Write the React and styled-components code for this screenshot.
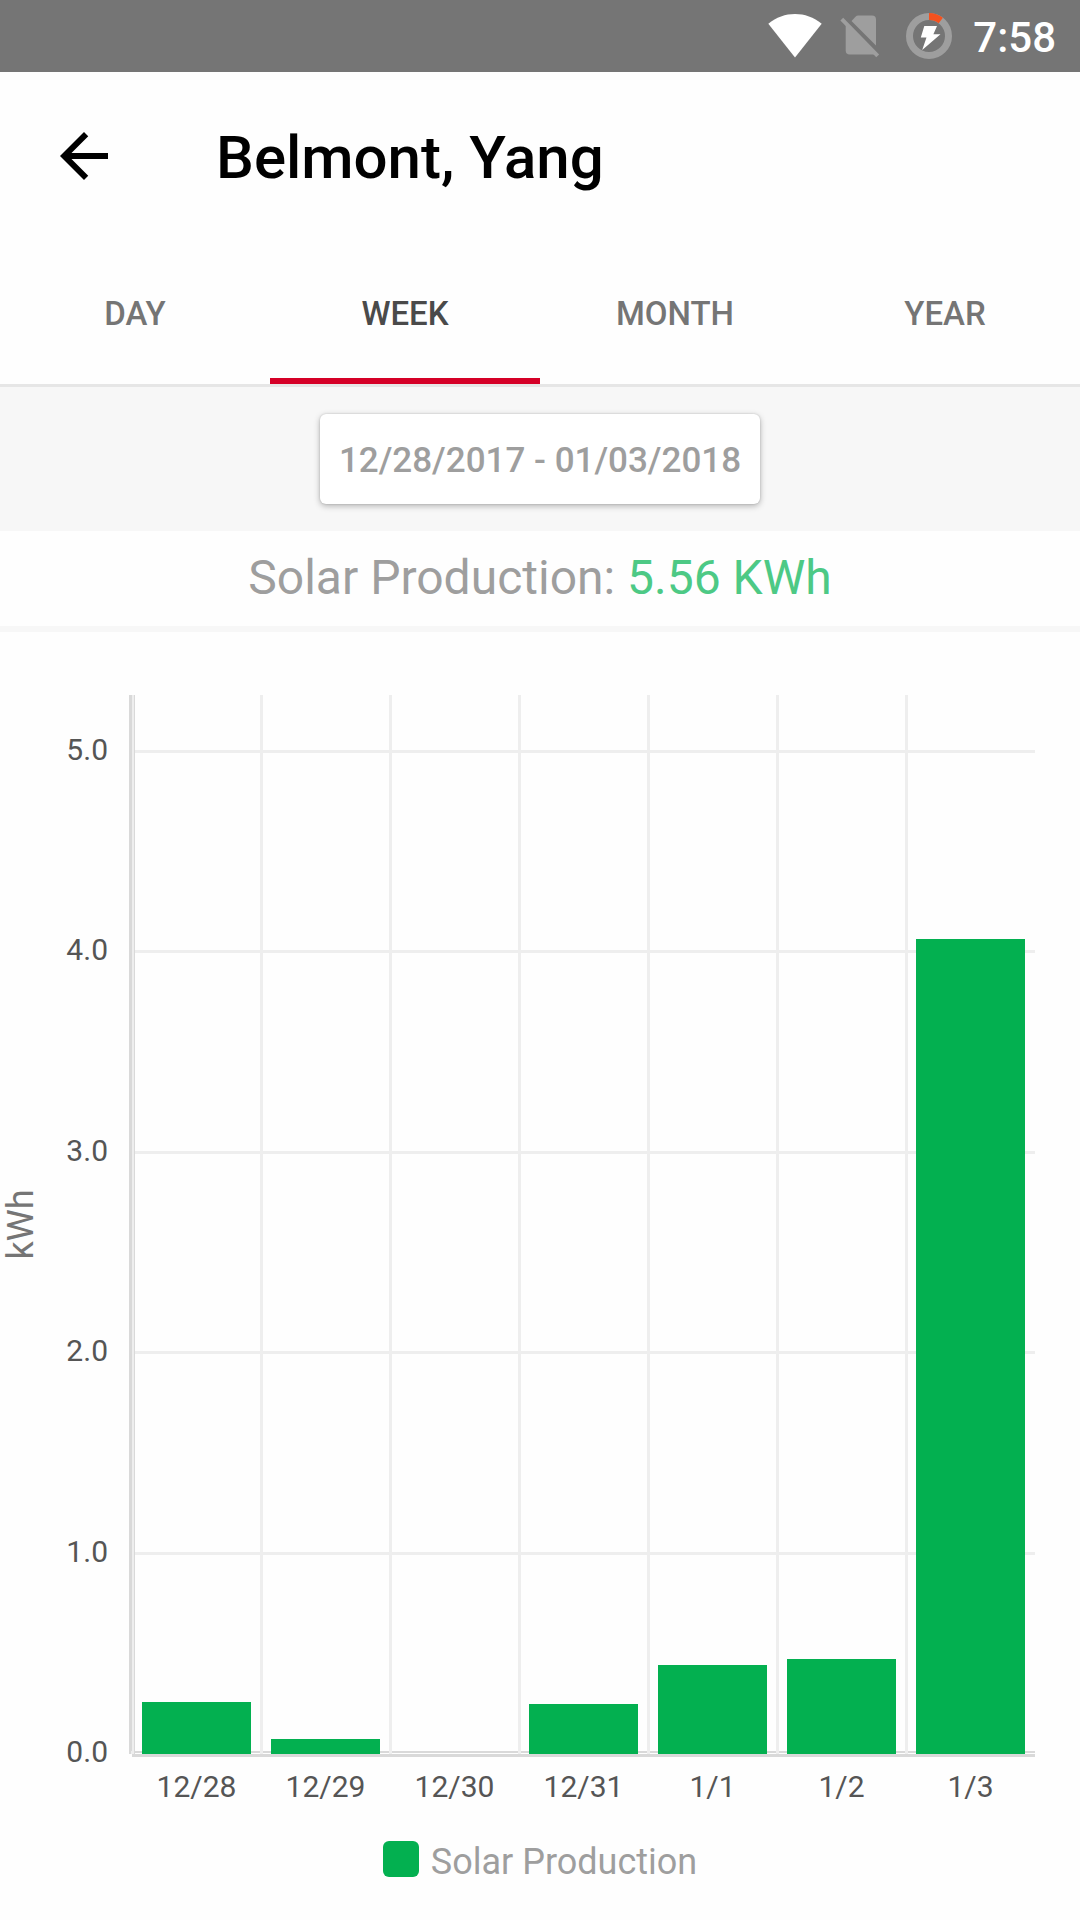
import React, { useState } from 'react';
import styled, { createGlobalStyle } from 'styled-components';

const TABS = ['DAY', 'WEEK', 'MONTH', 'YEAR'];

const PRODUCTION = [
  { day: '12/28', value: 0.26 },
  { day: '12/29', value: 0.075 },
  { day: '12/30', value: 0 },
  { day: '12/31', value: 0.25 },
  { day: '1/1', value: 0.445 },
  { day: '1/2', value: 0.475 },
  { day: '1/3', value: 4.065 },
];

const TICKS = [0, 1, 2, 3, 4, 5];

// vertical scale of the chart
const BASELINE = 1059;
const UNIT = 200.5;

const yOf = (value) => Math.round(BASELINE - value * UNIT);
const xOf = (index) => `${(index * 100) / PRODUCTION.length}%`;

const WifiIcon = () => (
  <svg width="54" height="44" viewBox="0 0 54 44" aria-hidden="true">
    <path d="M27 43.500 L0.300 9.800 C16 -3.200 38 -3.200 53.700 9.800 Z" fill="#fff" />
  </svg>
);

const NoSimIcon = () => (
  <svg width="40" height="44" viewBox="0 0 40 44" aria-hidden="true">
    <path
      d="M11.500 7 L15.500 2.800 Q16.600 1.500 18.300 1.500 H32 Q36 1.500 36 5.500 V31.500 Z"
      fill="#9e9e9e"
    />
    <path
      d="M5.700 10.800 L35.500 40 Q34.500 40.500 33 40.500 H9.700 Q5.700 40.500 5.700 36.500 Z"
      fill="#9e9e9e"
    />
    <path d="M1.800 5.200 L37.700 41.800" stroke="#9e9e9e" strokeWidth="4" />
  </svg>
);

const BatteryIcon = () => (
  <svg width="46" height="46" viewBox="0 0 46 46" aria-hidden="true">
    <circle cx="23" cy="23" r="19.500" fill="none" stroke="#9e9e9e" strokeWidth="7" />
    <path d="M23 3.500 A19.500 19.500 0 0 1 34.800 7.480" fill="none" stroke="#f4511e" strokeWidth="7" />
    <path d="M18.300 13 H31 L27.400 21.300 H34.500 L16.200 37 L20.500 24.600 H14.800 Z" fill="#fff" />
  </svg>
);

const BackIcon = () => (
  <svg width="72" height="72" viewBox="0 0 24 24" aria-hidden="true">
    <path d="M20 11H7.830l5.590-5.590L12 4l-8 8 8 8 1.410-1.410L7.830 13H20v-2z" fill="#000" />
  </svg>
);

const ProductionChart = () => (
  <Plot role="img" aria-label="Solar Production">
    {PRODUCTION.map((item, i) => (
      <GridLine key={item.day} x={xOf(i)} y="0" width="3" height={BASELINE} transform="translate(-1 0)" />
    ))}
    {TICKS.slice(1).map((tick) => (
      <GridLine key={tick} x="3" y={yOf(tick) - 2} width="100%" height="3" transform="translate(-3 0)" />
    ))}

    <AxisLine x="-3" y="0" width="3" height={BASELINE} />
    <AxisLine x="2" y="0" width="1" height={BASELINE} />
    <AxisLine x="0" y={BASELINE} width="100%" height="3" />
    <AxisLine x="0" y={BASELINE - 3} width="100%" height="2" />
    {PRODUCTION.map((item, i) => (
      <GridLine key={item.day} x={xOf(i)} y={BASELINE - 3} width="3" height="3" transform="translate(-1 0)" />
    ))}

    {PRODUCTION.map((item, i) => (
      <Bar
        key={item.day}
        x={xOf(i)}
        y={yOf(item.value)}
        width="12.070%"
        height={BASELINE - yOf(item.value)}
        transform="translate(10 0)"
      />
    ))}

    {TICKS.map((tick) => (
      <TickText key={tick} x="-24" y={yOf(tick) + 8} textAnchor="end">
        {tick.toFixed(1)}
      </TickText>
    ))}
    {PRODUCTION.map((item, i) => (
      <TickText key={item.day} x={xOf(i + 0.5)} y={BASELINE + 43} textAnchor="middle">
        {item.day}
      </TickText>
    ))}
    <UnitText transform={`translate(-99 ${BASELINE / 2}) rotate(-90)`} textAnchor="middle">
      kWh
    </UnitText>
  </Plot>
);

const App = () => {
  const [period, setPeriod] = useState('WEEK');

  return (
    <Page>
      <GlobalStyle />
      <StatusBar>
        <StatusIcons>
          <WifiIcon />
          <NoSimIcon />
        </StatusIcons>
        <BatteryIcon />
        <Clock>7:58</Clock>
      </StatusBar>

      <Header>
        <BackButton type="button" aria-label="Back">
          <BackIcon />
        </BackButton>
        <Title>Belmont, Yang</Title>
      </Header>

      <Tabs role="tablist">
        {TABS.map((tab) => (
          <Tab
            key={tab}
            type="button"
            role="tab"
            aria-selected={period === tab}
            $active={period === tab}
            onClick={() => setPeriod(tab)}
          >
            {tab}
          </Tab>
        ))}
      </Tabs>

      <RangeBar>
        <RangeButton type="button">12/28/2017 - 01/03/2018</RangeButton>
      </RangeBar>

      <Summary>
        Solar Production: <Total>5.56 KWh</Total>
      </Summary>

      <ChartSection>
        <ProductionChart />
      </ChartSection>

      <Legend>
        <Swatch />
        <LegendLabel>Solar Production</LegendLabel>
      </Legend>
    </Page>
  );
};

const GlobalStyle = createGlobalStyle`
  * {
    box-sizing: border-box;
  }

  body {
    margin: 0;
    background: #fefefe;
    font-family: Roboto, sans-serif;
  }

  button {
    border: none;
    font-family: inherit;
    cursor: pointer;
  }
`;

const Page = styled.div`
  display: flex;
  flex-direction: column;
  min-height: 100vh;
`;

const StatusBar = styled.div`
  display: flex;
  align-items: center;
  justify-content: flex-end;
  gap: 21px;
  height: 72px;
  padding: 0 24px;
  background: #757575;
`;

const StatusIcons = styled.div`
  display: flex;
  align-items: center;
  gap: 18px;
  padding-right: 5px;
`;

const Clock = styled.span`
  padding-top: 3px;
  font-size: 42px;
  line-height: 48px;
  font-weight: 500;
  color: #fff;
`;

const Header = styled.header`
  display: flex;
  align-items: center;
  gap: 96px;
  height: 168px;
  padding: 0 48px;
`;

const BackButton = styled.button`
  display: flex;
  padding: 0;
  background: none;
`;

const Title = styled.h1`
  margin: 0;
  padding-top: 4px;
  font-size: 60px;
  line-height: 72px;
  font-weight: 500;
  color: #000;
`;

const Tabs = styled.div`
  display: grid;
  grid-template-columns: repeat(4, 1fr);
  border-bottom: 3px solid #e6e6e6;
`;

const Tab = styled.button`
  height: 144px;
  padding: 10px 0 0;
  background: none;
  border-bottom: 6px solid ${props => (props.$active ? '#d50027' : 'transparent')};
  font-size: 33px;
  line-height: 40px;
  font-weight: 500;
  color: ${props => (props.$active ? '#4a4a4a' : '#757575')};
`;

const RangeBar = styled.div`
  display: flex;
  justify-content: center;
  padding: 27px 0;
  background: #f7f7f7;
`;

const RangeButton = styled.button`
  height: 90px;
  padding: 4px 19px 0;
  border-radius: 6px;
  background: #fff;
  box-shadow: 0 2px 6px rgba(0, 0, 0, 0.28), 0 0 2px rgba(0, 0, 0, 0.18);
  font-size: 35px;
  line-height: 42px;
  font-weight: 500;
  color: #9e9e9e;
`;

const Summary = styled.p`
  margin: 0;
  padding: 19px 0 20px;
  border-bottom: 6px solid #f7f7f7;
  font-size: 48px;
  line-height: 56px;
  text-align: center;
  color: #9e9e9e;
`;

const Total = styled.span`
  color: #4dc985;
`;

const ChartSection = styled.section`
  display: flex;
  padding: 63px 45px 0 132px;
`;

const Plot = styled.svg`
  width: 100%;
  height: 1110px;
  overflow: visible;
  shape-rendering: crispEdges;
`;

const GridLine = styled.rect`
  fill: #eeeeee;
`;

const AxisLine = styled.rect`
  fill: #d9d9d9;
`;

const Bar = styled.rect`
  fill: #03b050;
`;

const TickText = styled.text`
  font-size: 30px;
  fill: #555;
`;

const UnitText = styled.text`
  font-size: 36px;
  fill: #757575;
`;

const Legend = styled.div`
  display: flex;
  justify-content: center;
  gap: 12px;
  padding: 36px 0;
`;

const Swatch = styled.span`
  width: 36px;
  height: 36px;
  border-radius: 6px;
  background: #03b050;
`;

const LegendLabel = styled.span`
  font-size: 36px;
  line-height: 42px;
  color: #9e9e9e;
`;

export default App;
